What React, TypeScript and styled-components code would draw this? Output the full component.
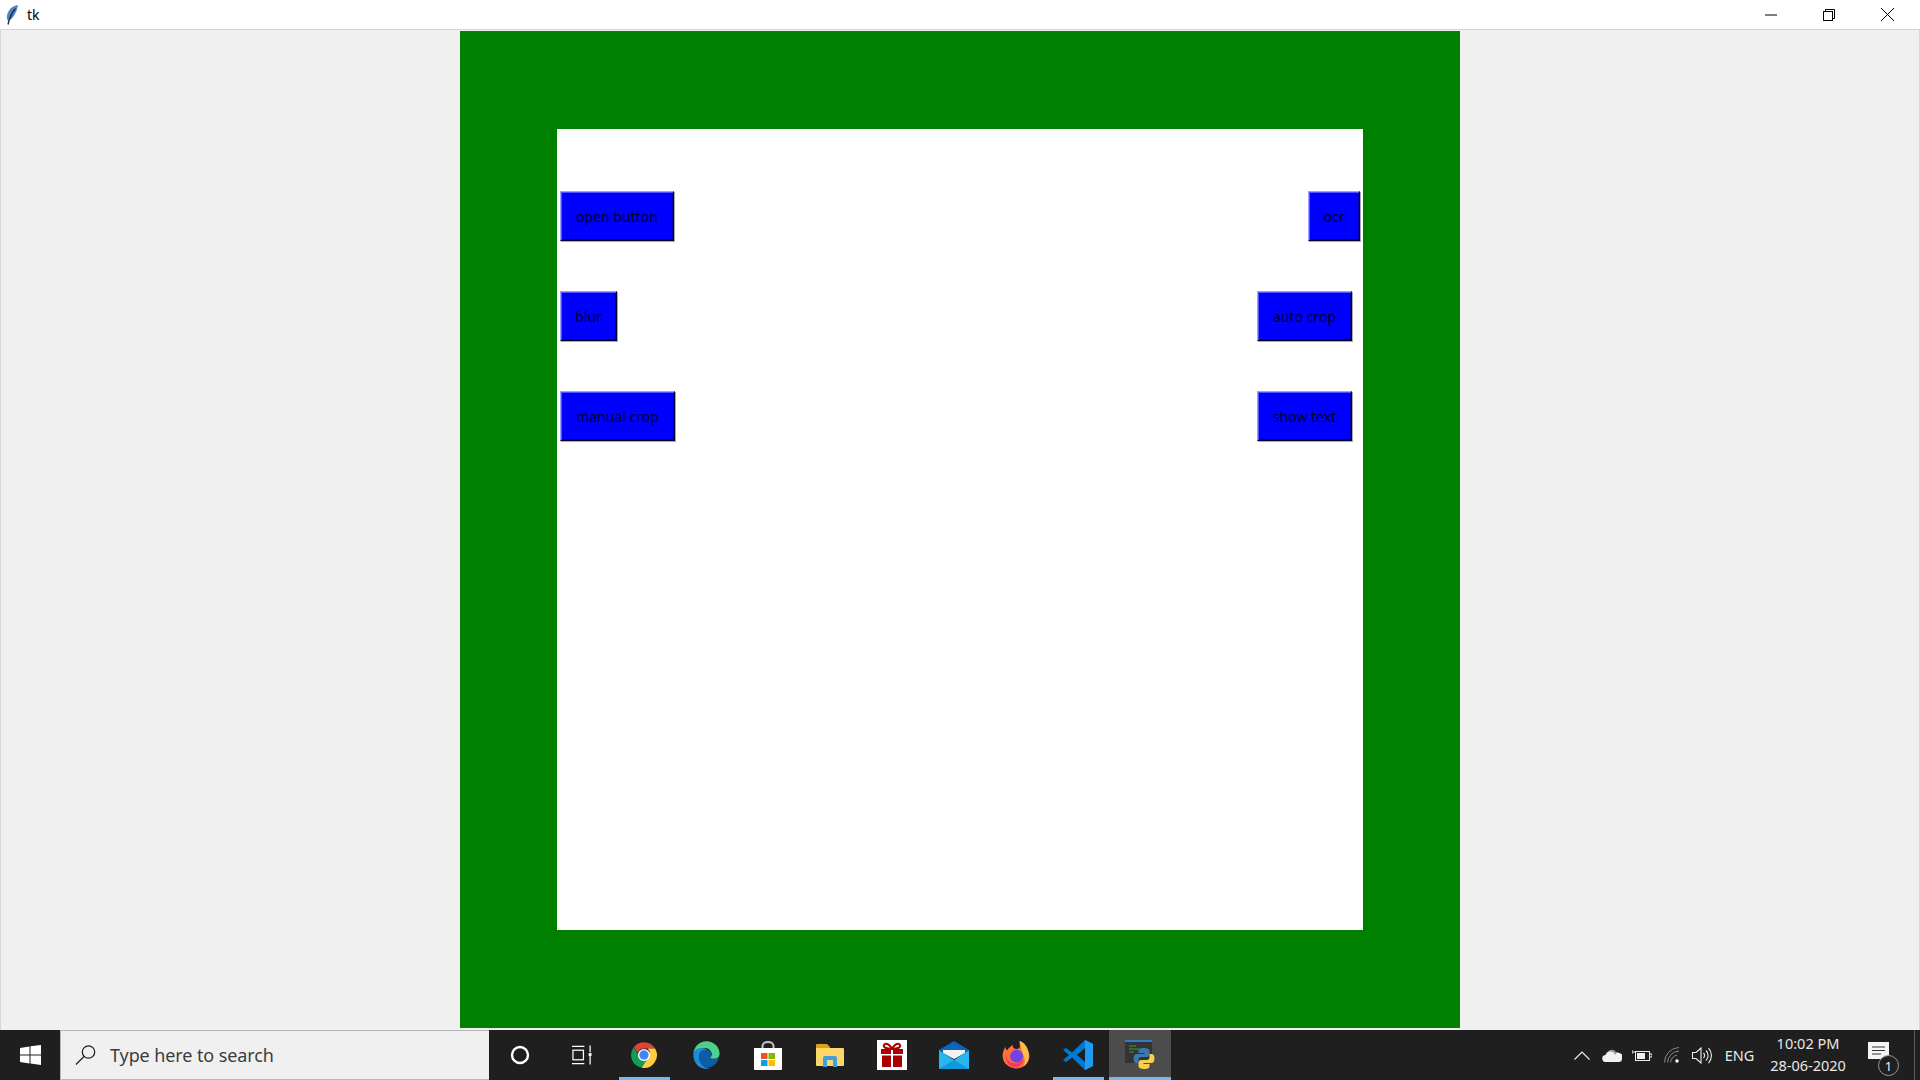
import React from 'react';
import styled, { createGlobalStyle } from 'styled-components';

const GlobalStyle = createGlobalStyle`
  html, body {
    margin: 0;
    padding: 0;
    width: 1920px;
    height: 1080px;
    overflow: hidden;
    background: #f0f0f0;
  }
`;

const Screen = styled.div`
  display: flex;
  flex-direction: column;
  width: 1920px;
  height: 1080px;
  font-family: "Noto Sans", "Open Sans", sans-serif;
`;

const TitleBar = styled.div`
  display: flex;
  align-items: center;
  flex: 0 0 30px;
  box-sizing: border-box;
  padding-right: 3px;
  background: #fff;
  border-bottom: 1px solid #d4d4d4;
`;

const TitleIcon = styled.svg`
  width: 14px;
  height: 20px;
  margin-left: 5px;
`;

const TitleText = styled.span`
  margin-left: 8px;
  margin-right: auto;
  font-size: 14px;
  color: #000;
`;

const WindowButton = styled.div`
  display: flex;
  align-items: center;
  justify-content: center;
  width: 58.5px;
  height: 29px;
`;

const Main = styled.main`
  display: flex;
  justify-content: center;
  flex: 0 0 1000px;
  box-sizing: border-box;
  padding-top: 1px;
  background: #f0f0f0;
  border-left: 1px solid #d8d8d8;
  border-right: 1px solid #d8d8d8;
`;

const GreenFrame = styled.div`
  box-sizing: border-box;
  width: 1000px;
  height: 997px;
  padding: 98px 97px;
  background: #008000;
`;

const Canvas = styled.div`
  display: flex;
  flex-direction: column;
  gap: 50px;
  box-sizing: border-box;
  height: 100%;
  padding: 62px 3px 0;
  background: #fff;
`;

const ButtonRow = styled.div`
  display: flex;
  justify-content: space-between;
`;

const ActionButton = styled.button<{ $width: number; $inset?: number }>`
  box-sizing: border-box;
  width: ${p => p.$width}px;
  height: 50px;
  margin: 0 ${p => p.$inset ?? 0}px 0 0;
  padding: 0;
  background: #0000ff;
  border: 1px solid;
  border-color: #a0a0ff #000030 #000030 #a0a0ff;
  box-shadow: inset 1px 1px 0 #5050ff, inset -1px -1px 0 #0000a0, 1px 1px 0 #a8a8a8;
  font-family: "Noto Sans", "Open Sans", sans-serif;
  font-size: 14px;
  color: #000028;
`;

const Taskbar = styled.footer`
  display: flex;
  flex: 0 0 50px;
  align-items: stretch;
  background: #1f1f1f;
`;

const StartSlot = styled.div`
  display: flex;
  align-items: center;
  justify-content: center;
  flex: 0 0 60px;
`;

const SearchBox = styled.div`
  display: flex;
  align-items: center;
  box-sizing: border-box;
  flex: 0 0 429px;
  padding-left: 14px;
  background: #f0f0f0;
  border: 1px solid #b8b8b8;
  border-width: 1px 0 1px 1px;
`;

const SearchText = styled.span`
  margin-left: 14px;
  font-size: 18px;
  letter-spacing: -0.1px;
  color: #3c3c3c;
`;

const TaskSlot = styled.div<{ $state?: 'running' | 'active' }>`
  position: relative;
  display: flex;
  align-items: center;
  justify-content: center;
  flex: 0 0 62px;
  background: ${p => (p.$state === 'active' ? '#4c4c4c' : 'transparent')};

  &::after {
    content: '';
    display: ${p => (p.$state ? 'block' : 'none')};
    position: absolute;
    bottom: 0;
    left: ${p => (p.$state === 'running' ? '6px' : '0')};
    right: ${p => (p.$state === 'running' ? '5px' : '0')};
    height: 3px;
    background: #76b9ed;
  }
`;

const Tray = styled.div`
  display: flex;
  align-items: stretch;
  margin-left: auto;
`;

const TraySlot = styled.div`
  display: flex;
  align-items: center;
  justify-content: center;
  width: 30px;
`;

const LangSlot = styled.div`
  display: flex;
  align-items: center;
  justify-content: center;
  width: 45px;
  font-size: 14.5px;
  color: #e8e8e8;
`;

const Clock = styled.div`
  display: flex;
  flex-direction: column;
  align-items: center;
  justify-content: center;
  gap: 3px;
  width: 92px;
  padding-bottom: 2px;
  box-sizing: border-box;
  font-size: 14.5px;
  line-height: 19px;
  color: #e8e8e8;
`;

const NotifySlot = styled.div`
  position: relative;
  display: flex;
  align-items: center;
  width: 60px;
  padding-left: 14px;
  padding-bottom: 6px;
  box-sizing: border-box;
`;

const NotifyBadge = styled.span`
  position: absolute;
  left: 24px;
  top: 25px;
  display: flex;
  align-items: center;
  justify-content: center;
  box-sizing: border-box;
  width: 21px;
  height: 21px;
  border: 1px solid #9a9a9a;
  border-radius: 50%;
  background: #1f1f1f;
  font-size: 13px;
  color: #f0f0f0;
`;

const ShowDesktop = styled.div`
  width: 5px;
  border-left: 1px solid #5a5a5a;
`;

const Feather = () => (
  <TitleIcon viewBox="0 0 14 20">
    <path d="M13 0C7 1 3 5 2 10.500c-.4 2.500 0 4 1 5.500C8 14 12 7 13 0z" fill="#4f86c6" />
    <path d="M10.500 3.500C7 7 5 11 3 19.500" stroke="#1c2a3e" strokeWidth="1.400" fill="none" />
  </TitleIcon>
);

const ChromeIcon = () => (
  <svg width="28" height="28" viewBox="0 0 48 48">
    <path d="M24 2a22 22 0 0 1 19 11H24a11 11 0 0 0-10.500 7.500L6.500 10.500A22 22 0 0 1 24 2z" fill="#db4437" />
    <path d="M6.500 10.500l9 15.500a10 10 0 0 0 11.500 8.500L20 45.800A22 22 0 0 1 6.500 10.500z" fill="#0f9d58" />
    <path d="M43 13a22 22 0 0 1-23 32.800L30 30a11 11 0 0 0 0-17z" fill="#ffcd40" />
    <circle cx="24" cy="24" r="10.500" fill="#fff" />
    <circle cx="24" cy="24" r="8" fill="#4285f4" />
  </svg>
);

const EdgeIcon = () => (
  <svg width="31" height="30" viewBox="0 0 48 48">
    <path d="M3 22C4 10 13 2 24 2c12 0 21 9 21 20 0 5-4 8-9 8-3 0-6-1-7-3 3-1 4-4 3-7-2-5-7-8-13-7C11 14 4 17 3 22z" fill="#4fd08a" />
    <path d="M3 22c1-6 8-10 15-9 3 0 6 1 8 3-8-2-14 4-14 11 0 8 6 17 17 18-2 1-3 1-6 1C11 46 2 35 3 22z" fill="#1b8ed6" />
    <path d="M12 27c0-7 6-13 14-11 4 1 7 4 7 8 0 2-2 3-4 3 1 3 4 3 7 3 3 0 6-1 8-3-2 9-8 15-16 17-10 0-16-9-16-17z" fill="#0c5da8" />
  </svg>
);

const StoreIcon = () => (
  <svg width="30" height="29" viewBox="0 0 30 29">
    <path d="M9.500 8V5a5.500 4 0 0 1 11 0v3" fill="none" stroke="#c4c4c4" strokeWidth="2" />
    <path d="M1 7h28v21a1 1 0 0 1-1 1H2a1 1 0 0 1-1-1z" fill="#fff" />
    <rect x="8" y="12" width="6.500" height="6" fill="#f25022" />
    <rect x="15.500" y="12" width="6.500" height="6" fill="#7fba00" />
    <rect x="8" y="19" width="6.500" height="6" fill="#00a4ef" />
    <rect x="15.500" y="19" width="6.500" height="6" fill="#ffb900" />
  </svg>
);

const FolderIcon = () => (
  <svg width="28" height="24" viewBox="0 0 28 24">
    <path d="M0 2a1 1 0 0 1 1-1h10l3 3v4H0z" fill="#d9a21c" />
    <path d="M0 5h27a1 1 0 0 1 1 1v16a1 1 0 0 1-1 1H1a1 1 0 0 1-1-1z" fill="#fcd768" />
    <path d="M7 24v-9a2 2 0 0 1 2-2h10a2 2 0 0 1 2 2v9h-4v-7h-6v7z" fill="#3f9fe0" />
  </svg>
);

const GiftIcon = () => (
  <svg width="30" height="30" viewBox="0 0 30 30">
    <rect width="30" height="30" fill="#fff" />
    <path d="M15 9C12 3 8 3 7 5s2 4 8 4zm0 0c3-6 7-6 8-4s-2 4-8 4z" fill="none" stroke="#b00000" strokeWidth="2" />
    <path d="M4 9h10v5H4zm12 0h10v5H16zM5 15.500h9V27H5zm11 0h9V27h-9z" fill="#a80000" />
  </svg>
);

const MailIcon = () => (
  <svg width="30" height="28" viewBox="0 0 30 28">
    <path d="M0 9L15 0l15 9-15 9z" fill="#0a66b8" />
    <path d="M4 9h22v3l-11 6-11-6z" fill="#f2f2f2" />
    <path d="M0 9l15 10L30 9v19H0z" fill="#29b6ee" />
    <path d="M0 28l15-9 15 9z" fill="#1496dc" />
  </svg>
);

const FirefoxIcon = () => (
  <svg width="28" height="30" viewBox="0 0 48 50">
    <path d="M24 48C11 48 1 38 1 26c0-5 2-11 5-15 0 3 1 5 3 6 2-4 6-7 10-9-1 3 0 5 2 6 3 1 6 1 9-1 1-3 1-7-1-12 8 3 12 9 14 14 3 4 4 8 4 12 0 12-10 21-23 21z" fill="#ff7139" />
    <path d="M31 1c9 4 15 13 15 25 0 7-3 14-9 18 3-6 3-13 0-18C34 18 31 10 31 1z" fill="#ffbd4f" />
    <circle cx="25" cy="27" r="11" fill="#7542e5" />
    <path d="M6 24c2 10 10 16 20 15 5-1 9-4 11-8 0 8-6 15-15 15C13 46 6 37 6 24z" fill="#ff3750" />
  </svg>
);

const VSCodeIcon = () => (
  <svg width="30" height="30" viewBox="0 0 30 30">
    <path d="M22 0l8 4v22l-8 4-13-12.500-6 4.500-3-2 6-5-6-5 3-2 6 4.500zM22 8l-8 7 8 7z" fill="#0078d4" />
    <path d="M22 0l8 4v22l-8 4z" fill="#1f9cf0" />
  </svg>
);

const PythonIcon = () => (
  <svg width="30" height="30" viewBox="0 0 30 30">
    <rect x="0" y="0" width="27" height="23" fill="#333" />
    <rect x="0" y="0" width="27" height="2" fill="#2f7fc8" />
    <path d="M4 6h7M4 9h10M4 12h5" stroke="#3c9a3c" strokeWidth="1" />
    <g transform="translate(2.500 -1)">
      <path d="M16 9c-4 0-5 1-5 3v2h6v1H9c-2 0-3 2-3 4.500S7 24 9 24h2v-3c0-2 1-3 3-3h5c2 0 3-1 3-3v-3c0-2-2-3-6-3z" fill="#3b78b0" />
      <path d="M17 30c4 0 5-1 5-3v-2h-6v-1h8c2 0 3-2 3-4.500S26 15 24 15h-2v3c0 2-1 3-3 3h-5c-2 0-3 1-3 3v3c0 2 2 3 6 3z" fill="#f7d04a" />
    </g>
  </svg>
);

const App: React.FC = () => (
  <>
    <GlobalStyle />
    <Screen>
      <TitleBar>
        <Feather />
        <TitleText>tk</TitleText>
        <WindowButton>
          <svg width="12" height="2" viewBox="0 0 12 2"><path d="M0 1h12" stroke="#000" /></svg>
        </WindowButton>
        <WindowButton>
          <svg width="12" height="12" viewBox="0 0 12 12" fill="none" stroke="#000">
            <rect x="0.500" y="2.500" width="9" height="9" />
            <path d="M2.500 2.500v-2h9v9h-2" />
          </svg>
        </WindowButton>
        <WindowButton>
          <svg width="13" height="13" viewBox="0 0 13 13" stroke="#000"><path d="M0 0l13 13M13 0L0 13" /></svg>
        </WindowButton>
      </TitleBar>
      <Main>
        <GreenFrame>
          <Canvas>
            <ButtonRow>
              <ActionButton $width={114}>open button</ActionButton>
              <ActionButton $width={52}>ocr</ActionButton>
            </ButtonRow>
            <ButtonRow>
              <ActionButton $width={57}>blur</ActionButton>
              <ActionButton $width={95} $inset={8}>auto crop</ActionButton>
            </ButtonRow>
            <ButtonRow>
              <ActionButton $width={115}>manual crop</ActionButton>
              <ActionButton $width={95} $inset={8}>show text</ActionButton>
            </ButtonRow>
          </Canvas>
        </GreenFrame>
      </Main>
      <Taskbar>
        <StartSlot>
          <svg width="21" height="20" viewBox="0 0 21 20" fill="#fff">
            <path d="M0 3l9.500-1.500V9.500H0zM10.500 1.300L21 0v9.500H10.500zM0 10.500h9.500v8L0 17zM10.500 10.500H21V20l-10.500-1.500z" />
          </svg>
        </StartSlot>
        <SearchBox>
          <svg width="21" height="20" viewBox="0 0 21 20" fill="none" stroke="#222" strokeWidth="1.300">
            <circle cx="13.500" cy="7" r="6.200" />
            <path d="M9 11.500L1 19.500" />
          </svg>
          <SearchText>Type here to search</SearchText>
        </SearchBox>
        <TaskSlot>
          <svg width="20" height="20" viewBox="0 0 20 20" fill="none" stroke="#fff" strokeWidth="2.400">
            <circle cx="10" cy="10" r="8" />
          </svg>
        </TaskSlot>
        <TaskSlot>
          <svg width="20" height="20" viewBox="0 0 21 20" fill="none" stroke="#fff" strokeWidth="1.300">
            <path d="M0 1h13M0 19h13" />
            <rect x="1" y="5" width="11" height="10" />
            <path d="M19 0v7M19 11v9" />
            <rect x="17.500" y="8" width="3" height="3" fill="#fff" stroke="none" />
          </svg>
        </TaskSlot>
        <TaskSlot $state="running"><ChromeIcon /></TaskSlot>
        <TaskSlot><EdgeIcon /></TaskSlot>
        <TaskSlot><StoreIcon /></TaskSlot>
        <TaskSlot><FolderIcon /></TaskSlot>
        <TaskSlot><GiftIcon /></TaskSlot>
        <TaskSlot><MailIcon /></TaskSlot>
        <TaskSlot><FirefoxIcon /></TaskSlot>
        <TaskSlot $state="running"><VSCodeIcon /></TaskSlot>
        <TaskSlot $state="active"><PythonIcon /></TaskSlot>
        <Tray>
          <TraySlot>
            <svg width="16" height="9" viewBox="0 0 16 9" fill="none" stroke="#eee" strokeWidth="1.200"><path d="M.5 8.500L8 1l7.500 7.500" /></svg>
          </TraySlot>
          <TraySlot>
            <svg width="20" height="13" viewBox="0 0 20 13">
              <path d="M5 5a5 5 0 0 1 9-2 4 4 0 0 1 4 4H5z" fill="#9a9a9a" />
              <path d="M4 13a3.500 3.500 0 0 1-.5-7A5 5 0 0 1 13 6a3.500 3.500 0 0 1 7 3.500A3.500 3.500 0 0 1 16.500 13z" fill="#f2f2f2" />
            </svg>
          </TraySlot>
          <TraySlot>
            <svg width="20" height="12" viewBox="0 0 20 12" fill="none" stroke="#eee">
              <rect x="3.500" y="2.500" width="14" height="9" />
              <rect x="5" y="4" width="8" height="6" fill="#eee" stroke="none" />
              <path d="M18 5h2v3h-2" />
              <path d="M0 3h3M0 1v4" />
            </svg>
          </TraySlot>
          <TraySlot>
            <svg width="16" height="16" viewBox="0 0 16 16" fill="none" stroke="#8a8a8a" strokeWidth="1">
              <path d="M.5 15.500A15 15 0 0 1 15 .5M3.500 15.500A12 12 0 0 1 15 4M6.500 15.500A9 9 0 0 1 13 8" />
              <circle cx="13" cy="14" r="1.700" fill="#fff" stroke="none" />
            </svg>
          </TraySlot>
          <TraySlot>
            <svg width="20" height="17" viewBox="0 0 20 17" fill="none" stroke="#eee" strokeWidth="1.100">
              <path d="M.5 5.500h3.500L9 1v15l-5-4.500H.5z" />
              <path d="M11.500 6a3.500 3.500 0 0 1 0 5M14 3.500a7 7 0 0 1 0 10M16.500 1a11 11 0 0 1 0 15" />
            </svg>
          </TraySlot>
          <LangSlot>ENG</LangSlot>
          <Clock>
            <span>10:02 PM</span>
            <span>28-06-2020</span>
          </Clock>
          <NotifySlot>
            <svg width="22" height="20" viewBox="0 0 22 20">
              <path d="M0 0h21v17H0z" fill="#f4f4f4" />
              <path d="M4 5h13M4 8.500h13M4 12h9" stroke="#333" />
            </svg>
            <NotifyBadge>1</NotifyBadge>
          </NotifySlot>
          <ShowDesktop />
        </Tray>
      </Taskbar>
    </Screen>
  </>
);

export default App;
